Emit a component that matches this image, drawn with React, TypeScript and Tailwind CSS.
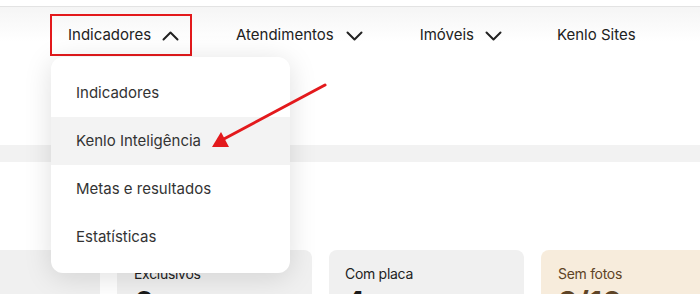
import React from "react";

const Chevron = ({ up = false }: { up?: boolean }) => (
  <svg width="17" height="10" viewBox="0 0 17 10" fill="none" className="shrink-0">
    <path
      d={up ? "M1.5 8.5 L8.5 1.5 L15.5 8.5" : "M1.5 1.5 L8.5 8.5 L15.5 1.5"}
      stroke="#222"
      strokeWidth="2"
      strokeLinecap="round"
      strokeLinejoin="round"
    />
  </svg>
);

export default function App() {
  const font = { fontFamily: "Inter, 'Noto Sans', sans-serif" };
  return (
    <div className="relative w-[700px] h-[294px] overflow-hidden bg-white" style={font}>
      <div className="h-[6px] bg-white" />
      <div className="h-px bg-[#e3e3e3]" />
      <div className="h-[138px] bg-gradient-to-b from-[#f5f5f5] via-white via-[25%] to-white">
        <nav className="flex items-center pt-[7px] text-[15px] text-[#222]">
          <div className="ml-[50px] flex h-[42px] w-[142px] items-center border-2 border-[#e3191c] pl-[16px] gap-[11px] pt-px">
            <span>Indicadores</span>
            <Chevron up />
          </div>
          <div className="ml-[44px] flex items-center gap-[12px] pt-px">
            <span>Atendimentos</span>
            <Chevron />
          </div>
          <div className="ml-[57px] flex items-center gap-[11px] pt-px">
            <span>Imóveis</span>
            <Chevron />
          </div>
          <div className="ml-[55px] flex items-center pt-px">
            <span>Kenlo Sites</span>
          </div>
        </nav>
      </div>
      <div className="h-[17px] bg-[#f2f2f2]" />
      <div className="h-[88px] bg-white" />
      <div className="flex gap-[17px] ml-[-95px]">
        <div className="h-[80px] w-[195px] shrink-0 rounded-lg bg-[#f0f0f0]" />
        <div className="h-[80px] w-[195px] shrink-0 rounded-lg bg-[#f0f0f0] px-[17px] pt-[13px]">
          <div className="text-[14px] text-[#222] tracking-[-0.3px]">Exclusivos</div>
          <div className="text-[30px] font-bold leading-[36px] text-[#1a1a1a]">6</div>
        </div>
        <div className="h-[80px] w-[195px] shrink-0 rounded-lg bg-[#f0f0f0] px-[16px] pt-[13px]">
          <div className="text-[14px] text-[#222] tracking-[-0.3px]">Com placa</div>
          <div className="text-[30px] font-bold leading-[36px] text-[#1a1a1a]">4</div>
        </div>
        <div className="h-[80px] w-[195px] shrink-0 rounded-lg bg-[#f7ecdc] px-[17px] pt-[13px]">
          <div className="text-[14px] text-[#5e4426] tracking-[-0.3px]">Sem fotos</div>
          <div className="text-[30px] font-bold leading-[36px] text-[#5e4426]">3/10</div>
        </div>
      </div>

      <div className="absolute left-[51px] top-[57px] w-[239px] rounded-xl bg-white py-[12px] shadow-[0_4px_28px_rgba(0,0,0,0.13)] text-[15px] text-[#333]">
        <div className="flex h-[48px] items-center pl-[25px]">Indicadores</div>
        <div className="flex h-[48px] items-center bg-[#f3f3f3] pl-[25px]">Kenlo Inteligência</div>
        <div className="flex h-[48px] items-center pl-[25px]">Metas e resultados</div>
        <div className="flex h-[48px] items-center pl-[25px]">Estatísticas</div>
      </div>

      <svg className="absolute left-0 top-0 pointer-events-none" width="700" height="294">
        <line x1="325" y1="85" x2="222" y2="140" stroke="#e3191c" strokeWidth="3" strokeLinecap="round" />
        <polygon points="212,147 221,132 229,147" fill="#e3191c" />
      </svg>
    </div>
  );
}
